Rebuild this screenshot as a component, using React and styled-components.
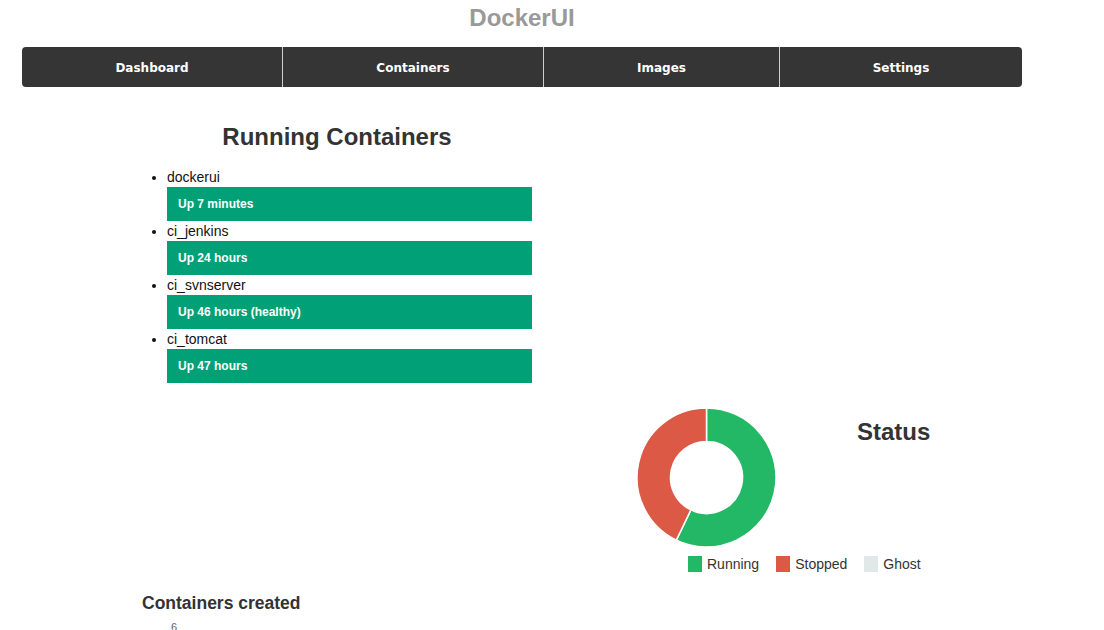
import React from "react";
import styled, { createGlobalStyle } from "styled-components";

const Global = createGlobalStyle`
  body {
    margin: 0;
    background: #fff;
    font-family: "Liberation Sans", Arial, sans-serif;
    color: #333;
  }
`

const Page = styled.div`
  width: 1000px;
  margin-left: 22px;
`

const Title = styled.h1`
  margin: 0;
  font-size: 24px;
  line-height: 35px;
  font-weight: bold;
  color: #999;
  text-align: center;
`

const Nav = styled.nav`
  margin-top: 12px;
  display: grid;
  grid-template-columns: 260px 261px 236px 243px;
  height: 40px;
  background: #353535;
  border-radius: 4px;
`

const NavItem = styled.a`
  display: flex;
  align-items: center;
  justify-content: center;
  padding-top: 1px;
  font-family: "DejaVu Sans", Verdana, sans-serif;
  font-size: 12px;
  font-weight: bold;
  color: #fff;
  border-left: ${(p) => (p.first ? "none" : "1px solid #cfcfcf")};
  cursor: pointer;
`

const LeftCol = styled.section`
  width: 390px;
  margin-left: 120px;
  margin-top: 35px;
`

const Heading = styled.h2`
  margin: 0;
  font-size: 24px;
  line-height: 30px;
  font-weight: bold;
  color: #333;
  text-align: center;
`

const List = styled.ul`
  margin: 15px 0 0;
  padding-left: 25px;
`

const Item = styled.li`
  font-size: 14px;
  line-height: 20px;
  color: #111;
`

const Bar = styled.div`
  height: 34px;
  display: flex;
  align-items: center;
  padding-left: 11px;
  background: #01a077;
  color: #fff;
  font-size: 12px;
  font-weight: bold;
`

const StatusRow = styled.section`
  margin-top: 25px;
  margin-left: 614px;
  display: grid;
  grid-template-columns: 140px 1fr;
`

const StatusHeading = styled.h2`
  margin: 9px 0 0 81px;
  font-size: 24px;
  line-height: 30px;
  font-weight: bold;
  color: #333;
`

const Legend = styled.div`
  grid-column: 1 / span 2;
  display: flex;
  margin: 8px 0 0 52px;
`

const LegendItem = styled.div`
  display: flex;
  align-items: center;
  margin-right: 17px;
  font-size: 14px;
  line-height: 16px;
  color: #333;
`

const Swatch = styled.span`
  width: 14px;
  height: 16px;
  margin-right: 5px;
  background: ${(p) => p.color};
`

const Created = styled.section`
  margin-left: 120px;
  margin-top: 20px;
`

const SubHeading = styled.h3`
  margin: 0;
  font-size: 17.5px;
  line-height: 22px;
  font-weight: bold;
  color: #333;
`

const Axis = styled.div`
  display: flex;
  align-items: flex-end;
  margin-top: 7px;
  padding-left: 29px;
`

const AxisLabel = styled.span`
  font-size: 11px;
  line-height: 12px;
  color: #666;
`

const containers = [
  { name: "dockerui", status: "Up 7 minutes" },
  { name: "ci_jenkins", status: "Up 24 hours" },
  { name: "ci_svnserver", status: "Up 46 hours (healthy)" },
  { name: "ci_tomcat", status: "Up 47 hours" },
]

const slices = [
  { label: "Running", value: 4, color: "#22b865" },
  { label: "Stopped", value: 3, color: "#dc5945" },
  { label: "Ghost", value: 0, color: "#e1e9e8" },
]

function arc(cx, cy, r, R, a0, a1) {
  const p = (rad, a) => [cx + rad * Math.sin(a), cy - rad * Math.cos(a)]
  const large = a1 - a0 > Math.PI ? 1 : 0
  const [x0, y0] = p(R, a0)
  const [x1, y1] = p(R, a1)
  const [x2, y2] = p(r, a1)
  const [x3, y3] = p(r, a0)
  return `M${x0} ${y0} A${R} ${R} 0 ${large} 1 ${x1} ${y1} L${x2} ${y2} A${r} ${r} 0 ${large} 0 ${x3} ${y3} Z`
}

function Donut() {
  const total = slices.reduce((s, x) => s + x.value, 0)
  let a = 0
  return (
    <svg width="140" height="140" viewBox="0 0 140 140">
      {slices
        .filter((s) => s.value > 0)
        .map((s) => {
          const a0 = a
          a += (s.value / total) * Math.PI * 2
          return (
            <path
              key={s.label}
              d={arc(70.5, 69.5, 36, 69.5, a0, a)}
              fill={s.color}
              stroke="#fff"
              strokeWidth="1.5"
            />
          )
        })}
    </svg>
  )
}

export default function App() {
  const navs = ["Dashboard", "Containers", "Images", "Settings"]
  return (
    <Page>
      <Global />
      <Title>DockerUI</Title>
      <Nav>
        {navs.map((n, i) => (
          <NavItem key={n} first={i === 0}>{n}</NavItem>
        ))}
      </Nav>
      <LeftCol>
        <Heading>Running Containers</Heading>
        <List>
          {containers.map((c) => (
            <Item key={c.name}>
              {c.name}
              <Bar>{c.status}</Bar>
            </Item>
          ))}
        </List>
      </LeftCol>
      <StatusRow>
        <Donut />
        <StatusHeading>Status</StatusHeading>
        <Legend>
          {slices.map((s) => (
            <LegendItem key={s.label}>
              <Swatch color={s.color} />
              {s.label}
            </LegendItem>
          ))}
        </Legend>
      </StatusRow>
      <Created>
        <SubHeading>Containers created</SubHeading>
        <Axis>
          <AxisLabel>6</AxisLabel>
          <svg width="760" height="4">
            {[0, 1, 2, 3, 4, 5, 6].map((i) => (
              <rect key={i} x={8 + i * 125} y="2" width="1" height="2" fill="#ccc" />
            ))}
          </svg>
        </Axis>
      </Created>
    </Page>
  )
}
